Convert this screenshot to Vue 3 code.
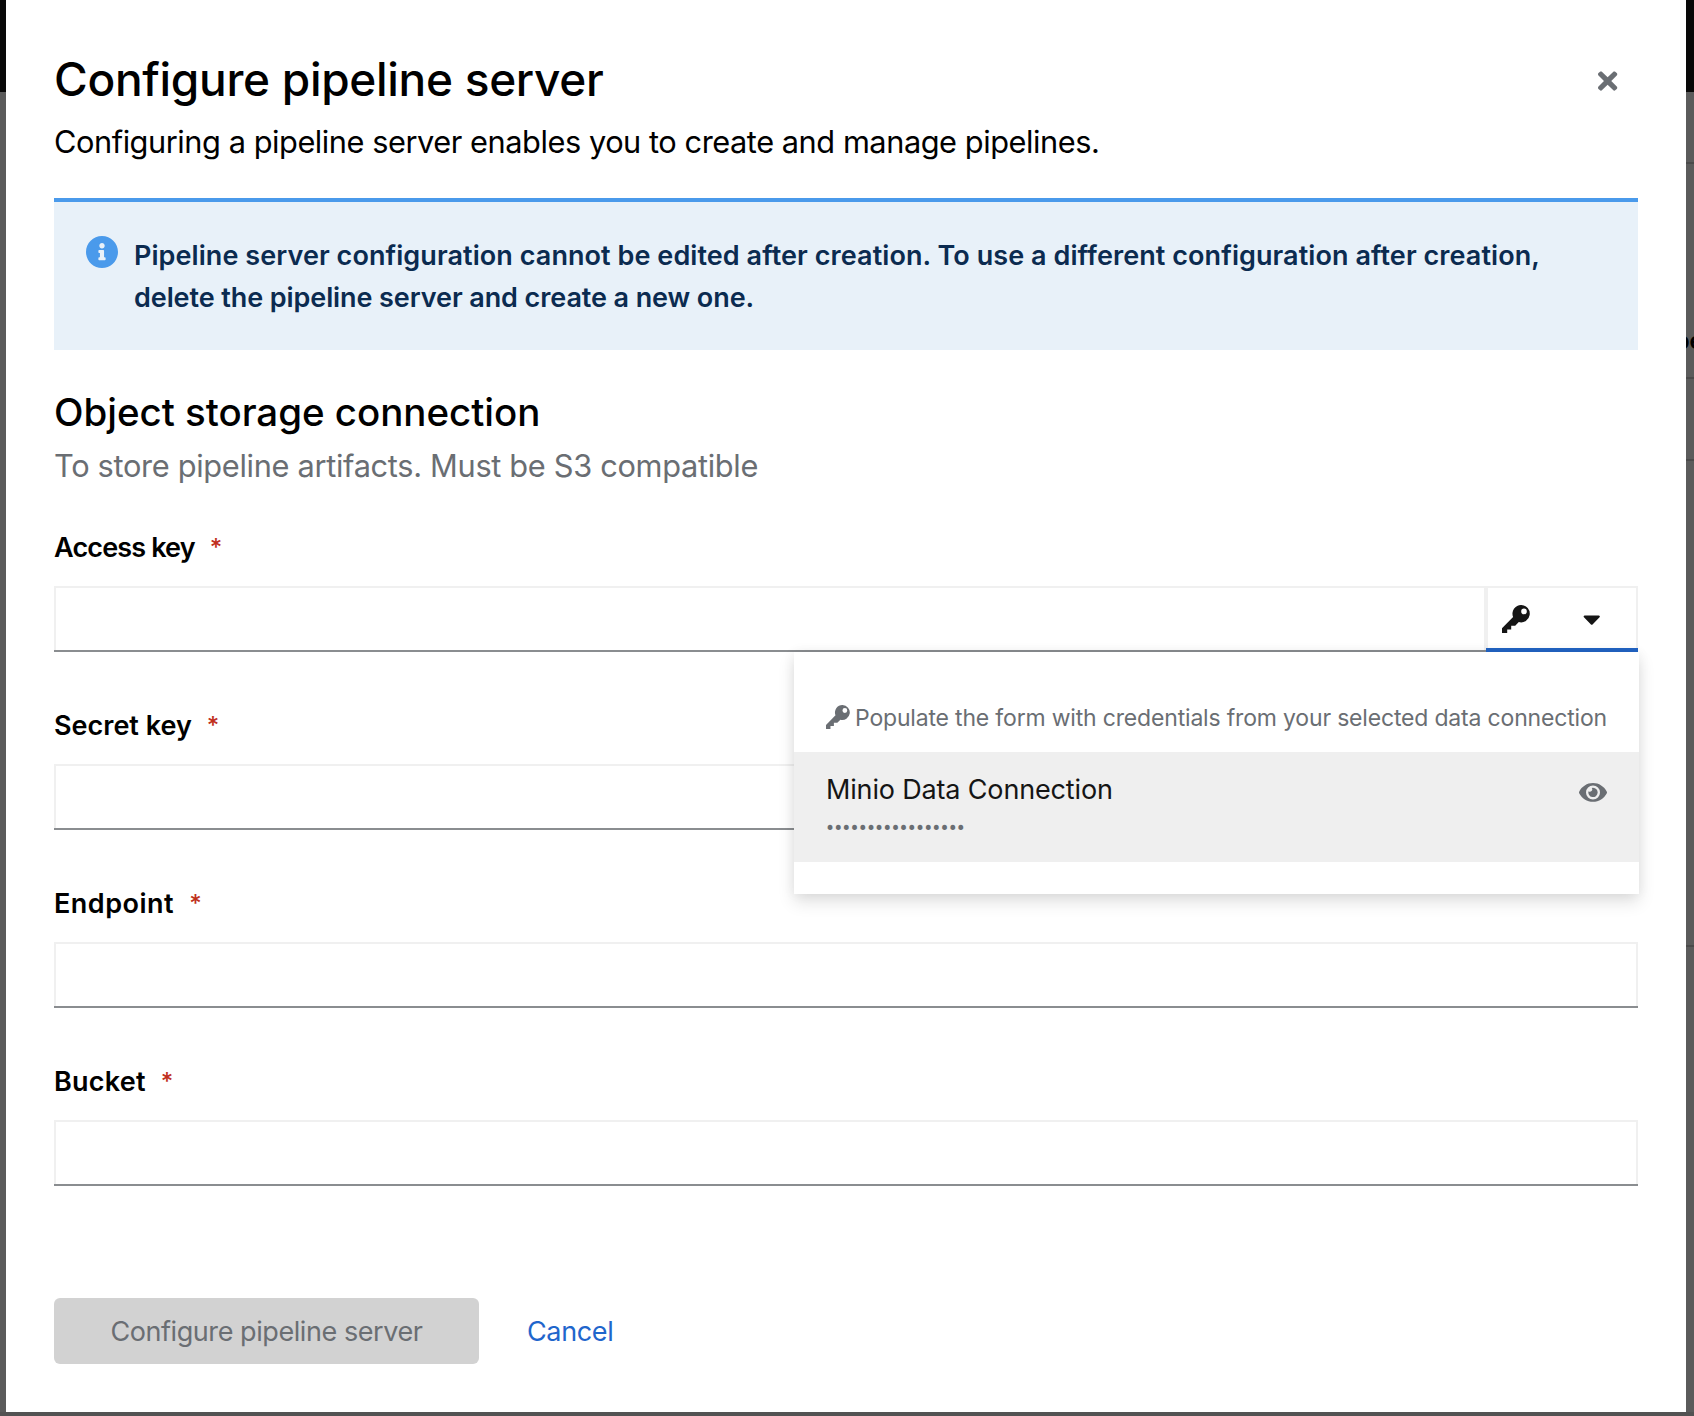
<script setup>
import { ref } from 'vue'

const fields = ref([
  { id: 'access', label: 'Access key', picker: true, value: '' },
  { id: 'secret', label: 'Secret key', value: '' },
  { id: 'endpoint', label: 'Endpoint', value: '' },
  { id: 'bucket', label: 'Bucket', value: '' },
])
const hidden = '•'.repeat(17)
const keyPath =
  'M19.3 0a8.7 8.7 0 1 1-2.5 17.1L13.2 20.7H9.2V24.4H5.2V28H0V23.2L11.1 12A8.7 8.7 0 0 1 19.3 0ZM22 3.6a2.8 2.8 0 1 0 0 5.6a2.8 2.8 0 0 0 0-5.6Z'
</script>

<template>
  <div class="screen">
    <div class="edge"></div>
    <main class="modal">
      <header class="head">
        <div>
          <h1>Configure pipeline server</h1>
          <p class="sub">Configuring a pipeline server enables you to create and manage pipelines.</p>
        </div>
        <button class="close" aria-label="Close">
          <svg width="19.25" height="28" viewBox="0 0 352 512"><path fill="currentColor" d="M242.72 256l100.07-100.07c12.28-12.28 12.28-32.19 0-44.48l-22.24-22.24c-12.28-12.28-32.19-12.28-44.48 0L176 189.28 75.93 89.21c-12.28-12.28-32.19-12.28-44.48 0L9.21 111.45c-12.28 12.28-12.28 32.19 0 44.48L109.28 256 9.21 356.07c-12.28 12.28-12.28 32.19 0 44.48l22.24 22.24c12.28 12.28 32.2 12.28 44.48 0L176 322.72l100.07 100.07c12.28 12.28 32.2 12.28 44.48 0l22.24-22.24c12.28-12.28 12.28-32.19 0-44.48L242.72 256z" /></svg>
        </button>
      </header>

      <section class="alert">
        <svg class="info" width="32" height="32" viewBox="8 8 496 496"><path fill="currentColor" d="M256 8C119.043 8 8 119.083 8 256c0 136.997 111.043 248 248 248s248-111.003 248-248C504 119.083 392.957 8 256 8zm0 110c23.196 0 42 18.804 42 42s-18.804 42-42 42-42-18.804-42-42 18.804-42 42-42zm56 254c0 6.627-5.373 12-12 12h-88c-6.627 0-12-5.373-12-12v-24c0-6.627 5.373-12 12-12h12v-64h-12c-6.627 0-12-5.373-12-12v-24c0-6.627 5.373-12 12-12h64c6.627 0 12 5.373 12 12v100h12c6.627 0 12 5.373 12 12v24z" /></svg>
        <p>
          <span class="line1">Pipeline server configuration cannot be edited after creation. To use a different configuration after creation,</span><br />
          <span class="line2">delete the pipeline server and create a new one.</span>
        </p>
      </section>

      <h2>Object storage connection</h2>
      <p class="helper">To store pipeline artifacts. Must be S3 compatible</p>

      <form>
        <div v-for="f in fields" :key="f.id" class="field">
          <label :for="f.id"><span :class="f.id">{{ f.label }}</span><span class="req">*</span></label>
          <div class="row">
            <div class="control"><input :id="f.id" v-model="f.value" type="text" /></div>
            <button v-if="f.picker" type="button" class="toggle" aria-label="Select data connection">
              <svg width="28" height="28" viewBox="0 0 28 28"><path fill="currentColor" fill-rule="evenodd" :d="keyPath" /></svg>
              <svg class="caret" width="17.5" height="28" viewBox="0 0 320 512"><path fill="currentColor" d="M31.3 192h257.3c17.8 0 26.7 21.5 14.1 34.1L174.1 354.8c-7.8 7.8-20.5 7.8-28.3 0L17.2 226.1C4.6 213.5 13.5 192 31.3 192z" /></svg>
            </button>
            <div v-if="f.picker" class="menu">
              <div class="menu-head">
                <svg width="24" height="24" viewBox="0 0 28 28"><path fill="currentColor" fill-rule="evenodd" :d="keyPath" /></svg>
                <span>Populate the form with credentials from your selected data connection</span>
              </div>
              <div class="item">
                <div>
                  <div class="name">Minio Data Connection</div>
                  <div class="dots">{{ hidden }}</div>
                </div>
                <svg class="eye" width="28" height="24.9" viewBox="0 0 576 512"><path fill="currentColor" d="M572.52 241.4C518.29 135.59 410.93 64 288 64S57.68 135.64 3.48 241.41a32.35 32.35 0 0 0 0 29.19C57.71 376.41 165.07 448 288 448s230.32-71.64 284.52-177.41a32.35 32.35 0 0 0 0-29.19zM288 400a144 144 0 1 1 144-144 143.93 143.93 0 0 1-144 144zm0-240a95.31 95.31 0 0 0-25.31 3.79 47.85 47.85 0 0 1-66.9 66.9A95.78 95.78 0 1 0 288 160z" /></svg>
              </div>
            </div>
          </div>
        </div>
      </form>

      <footer>
        <button class="primary" disabled>Configure pipeline server</button>
        <button class="cancel">Cancel</button>
      </footer>
    </main>
    <div class="edge right">
      <i class="r1"></i>
      <b>pe</b>
      <i class="r2"></i>
      <i class="r3"></i>
      <i class="r4"></i>
    </div>
  </div>
</template>

<style>
body {
  margin: 0;
}
</style>

<style scoped>
.screen {
  display: grid;
  grid-template-columns: 6px 1680px 8px;
  grid-template-rows: 1412px;
  width: 1694px;
  height: 1416px;
  overflow: hidden;
  background: #525252;
  font-family: Inter, 'Liberation Sans', sans-serif;
  color: #000;
}
.edge {
  position: relative;
  overflow: hidden;
  background: linear-gradient(#080808 92px, #5b5b5b 92px);
}
.right i {
  position: absolute;
  left: 0;
  width: 8px;
  height: 2px;
  background: #4a4a4a;
}
.r1 { top: 162px; }
.r2 { top: 377px; }
.r3 { top: 459px; }
.r4 { top: 945px; }
.right b {
  position: absolute;
  top: 328px;
  left: -11px;
  font-size: 23px;
  line-height: 26px;
  font-weight: 700;
}
.modal {
  box-sizing: border-box;
  padding: 48px 48px 0;
  background: #fff;
}
h1,
h2,
p {
  margin: 0;
}
button {
  margin: 0;
  padding: 0;
  border: 0;
  background: none;
  font: inherit;
}
svg {
  display: block;
  flex: none;
}
.head {
  display: flex;
  justify-content: space-between;
}
h1 {
  font-size: 46px;
  line-height: 62px;
  font-weight: 500;
  letter-spacing: -0.3px;
}
.sub {
  margin-top: 8px;
  font-size: 30.75px;
  line-height: 48px;
  letter-spacing: -0.455px;
}
.close {
  align-self: flex-start;
  margin: 19px 20.5px 0 0;
  color: #6a6e73;
}
.alert {
  display: flex;
  gap: 16px;
  margin-top: 32px;
  padding: 33px 32px 31px;
  border-top: 4px solid #4a9aeb;
  background: #e8f1f9;
  color: #0b2b50;
  font-size: 27px;
  line-height: 42px;
  font-weight: 600;
  white-space: nowrap;
}
.info {
  margin-top: 1px;
  color: #4a9aeb;
}
.line1 {
  letter-spacing: 0.07px;
}
.line2 {
  letter-spacing: -0.09px;
}
h2 {
  margin-top: 36px;
  font-size: 38.5px;
  line-height: 52px;
  font-weight: 500;
  letter-spacing: -0.03px;
}
.helper {
  margin-top: 4px;
  color: #6a6e73;
  font-size: 30.75px;
  line-height: 48px;
  letter-spacing: -0.32px;
}
form {
  display: flex;
  flex-direction: column;
  gap: 53px;
  margin-top: 37px;
}
label {
  display: flex;
  height: 42px;
  margin-bottom: 17px;
  font-size: 27px;
  line-height: 42px;
  font-weight: 600;
}
.access { letter-spacing: -0.85px; }
.endpoint { letter-spacing: 0.5px; }
.bucket { letter-spacing: 0.25px; }
.req {
  margin-left: 15px;
  color: #c0301c;
  font-size: 24px;
  font-weight: 500;
}
.row {
  position: relative;
  display: flex;
}
.control {
  flex: 1;
  height: 64px;
  border-bottom: 2px solid #8a8d90;
}
input {
  display: block;
  box-sizing: border-box;
  width: 100%;
  height: 64px;
  padding: 0 16px;
  border: 2px solid #f0f0f0;
  border-bottom: 0;
  outline: 0;
  background: #fff;
  font: inherit;
}
.toggle {
  position: relative;
  box-sizing: border-box;
  display: flex;
  justify-content: space-between;
  align-items: flex-start;
  width: 152px;
  height: 66px;
  padding: 17px 35.5px 0 14px;
  border: 2px solid #f0f0f0;
  border-bottom: 0;
  color: #151515;
}
.toggle::after {
  content: '';
  position: absolute;
  inset: auto -2px 0;
  height: 4px;
  background: #2264c4;
}
.menu {
  position: absolute;
  top: 66px;
  right: -1px;
  z-index: 2;
  box-sizing: border-box;
  width: 845px;
  padding: 48px 0 32px;
  background: #fff;
  box-shadow: 0 8px 16px rgba(3, 3, 3, 0.12), 0 0 12px rgba(3, 3, 3, 0.06);
}
.menu-head {
  display: flex;
  gap: 5px;
  padding: 0 32px 16px;
  color: #6a6e73;
  font-size: 23px;
  line-height: 36px;
  letter-spacing: -0.18px;
  white-space: nowrap;
}
.menu-head svg {
  margin-top: 5px;
}
.item {
  display: flex;
  justify-content: space-between;
  box-sizing: border-box;
  height: 110px;
  padding: 17px 32px 15px;
  background: #efefef;
}
.name {
  color: #151515;
  font-size: 27px;
  line-height: 42px;
  letter-spacing: -0.16px;
}
.dots {
  color: #6a6e73;
  font-family: Roboto, sans-serif;
  font-size: 24px;
  line-height: 35px;
  letter-spacing: 0.08px;
}
.eye {
  margin-top: 10.5px;
  color: #6a6e73;
}
footer {
  display: flex;
  margin-top: 112px;
  font-size: 27px;
  line-height: 66px;
}
.primary {
  width: 425px;
  height: 66px;
  padding-top: 1px;
  border-radius: 6px;
  background: #d2d2d2;
  color: #6a6e73;
  letter-spacing: -0.43px;
}
.cancel {
  height: 66px;
  margin-left: 48px;
  padding-top: 1px;
  color: #1f66cc;
  letter-spacing: -0.35px;
}
</style>
